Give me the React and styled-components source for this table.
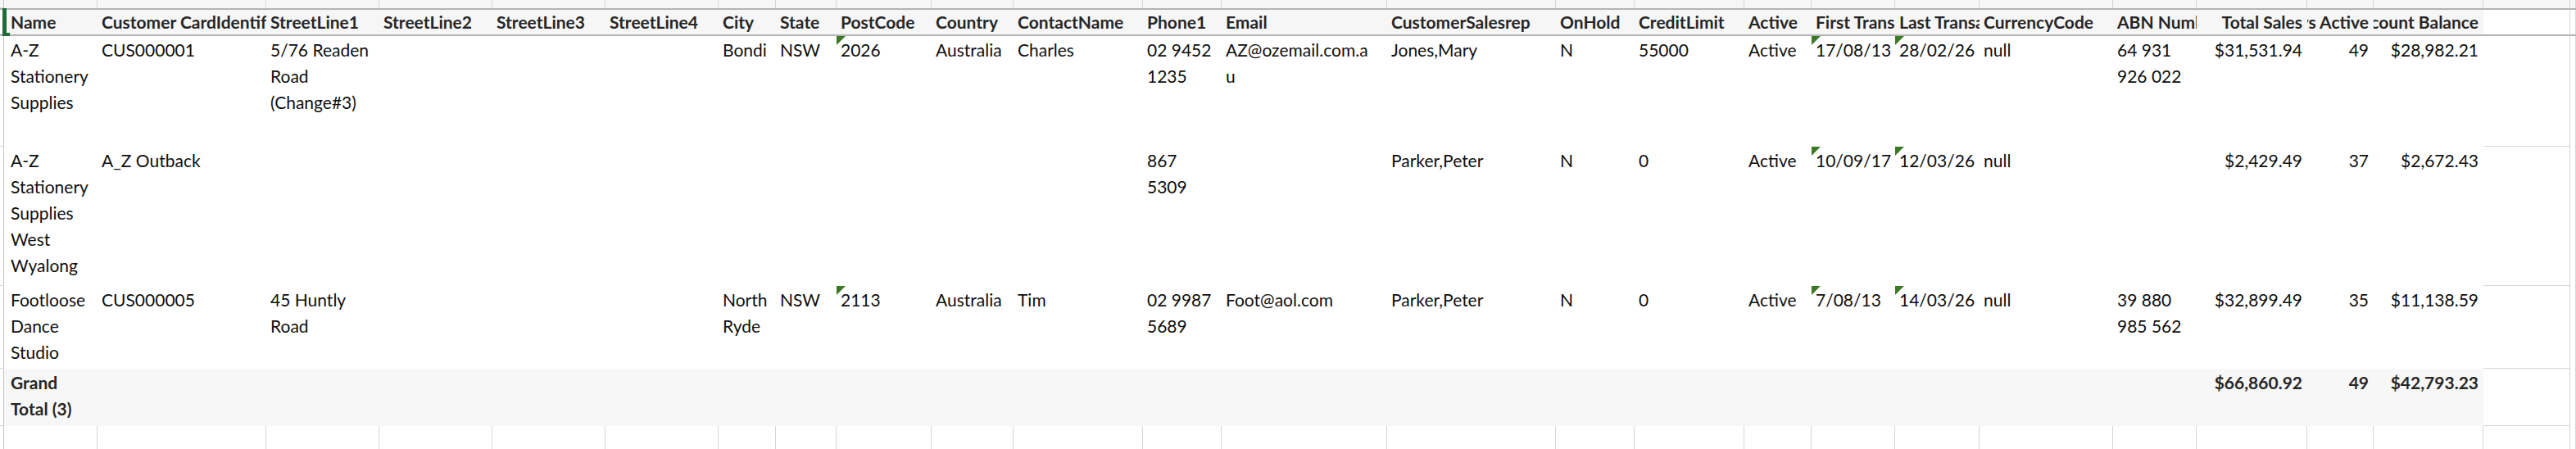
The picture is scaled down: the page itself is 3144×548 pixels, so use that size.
import React from "react";
import styled, { createGlobalStyle } from "styled-components";

const GlobalStyle = createGlobalStyle`
  html, body {
    margin: 0;
    padding: 0;
    background: #ffffff;
    overflow: hidden;
  }
  body {
    font-family: Lato, "Liberation Sans", sans-serif;
  }
`;

// column widths in px, taken from the sheet's gridlines
const columns = [
  { key: "name", title: "Name", width: 114, pad: 8 },
  { key: "card", title: "Customer CardIdentification", width: 206 },
  { key: "sl1", title: "StreetLine1", width: 138 },
  { key: "sl2", title: "StreetLine2", width: 138 },
  { key: "sl3", title: "StreetLine3", width: 138 },
  { key: "sl4", title: "StreetLine4", width: 138 },
  { key: "city", title: "City", width: 70 },
  { key: "state", title: "State", width: 74 },
  { key: "post", title: "PostCode", width: 116 },
  { key: "country", title: "Country", width: 100 },
  { key: "contact", title: "ContactName", width: 158 },
  { key: "phone", title: "Phone1", width: 96 },
  { key: "email", title: "Email", width: 202 },
  { key: "rep", title: "CustomerSalesrep", width: 206 },
  { key: "hold", title: "OnHold", width: 96 },
  { key: "credit", title: "CreditLimit", width: 134 },
  { key: "active", title: "Active", width: 82 },
  { key: "first", title: "First Transaction", width: 102 },
  { key: "last", title: "Last Transaction", width: 103 },
  { key: "currency", title: "CurrencyCode", width: 163 },
  { key: "abn", title: "ABN Number", width: 102 },
  { key: "sales", title: "Total Sales", width: 135, right: true },
  { key: "count", title: "Days Active", width: 81, right: true },
  { key: "balance", title: "Account Balance", width: 134, right: true },
];

const template = `5px ${columns.map((c) => `${c.width}px`).join(" ")} 106px 1fr`;

const rows = [
  {
    height: 135,
    name: ["A-Z", "Stationery", "Supplies"],
    card: ["CUS000001"],
    sl1: ["5/76 Readen", "Road", "(Change#3)"],
    city: ["Bondi"],
    state: ["NSW"],
    post: ["2026"],
    country: ["Australia"],
    contact: ["Charles"],
    phone: ["02 9452", "1235"],
    email: ["AZ@ozemail.com.a", "u"],
    rep: ["Jones,Mary"],
    hold: ["N"],
    credit: ["55000"],
    active: ["Active"],
    first: ["17/08/13"],
    last: ["28/02/26"],
    currency: ["null"],
    abn: ["64 931", "926 022"],
    sales: ["$31,531.94"],
    count: ["49"],
    balance: ["$28,982.21"],
    flags: ["post", "first", "last"],
  },
  {
    height: 170,
    name: ["A-Z", "Stationery", "Supplies", "West", "Wyalong"],
    card: ["A_Z Outback"],
    phone: ["867", "5309"],
    rep: ["Parker,Peter"],
    hold: ["N"],
    credit: ["0"],
    active: ["Active"],
    first: ["10/09/17"],
    last: ["12/03/26"],
    currency: ["null"],
    sales: ["$2,429.49"],
    count: ["37"],
    balance: ["$2,672.43"],
    flags: ["first", "last"],
  },
  {
    height: 101,
    name: ["Footloose", "Dance", "Studio"],
    card: ["CUS000005"],
    sl1: ["45 Huntly", "Road"],
    city: ["North", "Ryde"],
    state: ["NSW"],
    post: ["2113"],
    country: ["Australia"],
    contact: ["Tim"],
    phone: ["02 9987", "5689"],
    email: ["Foot@aol.com"],
    rep: ["Parker,Peter"],
    hold: ["N"],
    credit: ["0"],
    active: ["Active"],
    first: ["7/08/13"],
    last: ["14/03/26"],
    currency: ["null"],
    abn: ["39 880", "985 562"],
    sales: ["$32,899.49"],
    count: ["35"],
    balance: ["$11,138.59"],
    flags: ["post", "first", "last"],
  },
];

const grandTotal = {
  height: 70,
  name: ["Grand", "Total (3)"],
  sales: ["$66,860.92"],
  count: ["49"],
  balance: ["$42,793.23"],
};

const Sheet = styled.div`
  position: relative;
  width: 3144px;
  height: 548px;
  overflow: hidden;
  font-size: 21px;
  color: #0f0f0f;
`;

const Row = styled.div`
  display: grid;
  grid-template-columns: ${template};
  height: ${({ $height }) => $height}px;
  box-sizing: border-box;
  background: ${({ $bg }) => $bg || "#ffffff"};
  ${({ $frozen }) =>
    $frozen &&
    `
    border-top: 2px solid #b4b4b4;
    border-bottom: 2px solid #b4b4b4;
  `}
`;

const Gutter = styled.div`
  box-sizing: border-box;
  border-right: 1px solid #c4c4c4;
  border-bottom: 1px solid #d6d6d6;
`;

const Cell = styled.div`
  position: relative;
  box-sizing: border-box;
  min-width: 0;
  overflow: hidden;
  white-space: nowrap;
  display: flex;
  flex-direction: column;
  align-items: ${({ $right }) => ($right ? "flex-end" : "flex-start")};
  padding: ${({ $top }) => $top}px ${({ $right }) => ($right ? 6 : 0)}px 0
    ${({ $pad, $right }) => ($right ? 0 : $pad)}px;
  line-height: ${({ $lh }) => $lh}px;
  font-weight: ${({ $bold }) => ($bold ? 700 : 400)};
  color: ${({ $bold }) => ($bold ? "#262626" : "#0f0f0f")};
  background: ${({ $bg }) => $bg || "transparent"};
`;

const GridCell = styled.div`
  box-sizing: border-box;
  border-right: 1px solid #d6d6d6;
  border-bottom: ${({ $noBottom }) => ($noBottom ? "none" : "1px solid #d6d6d6")};
  background: ${({ $bg }) => $bg || "transparent"};
`;

const Line = styled.span`
  display: block;
`;

const Flag = styled.span`
  position: absolute;
  top: 0;
  left: 0;
  width: 11px;
  height: 11px;
  background: #3b7a24;
  clip-path: polygon(0 0, 100% 0, 0 100%);
`;

const Selection = styled.div`
  position: absolute;
  left: 3px;
  top: 10px;
  width: 5px;
  height: 34px;
  background: #1f6b3a;

  &::after {
    content: "";
    position: absolute;
    right: -4px;
    bottom: 0;
    width: 5px;
    height: 4px;
    background: #1f6b3a;
  }
`;

const DataRow = ({ row, bold, bg }) => (
  <Row $height={row.height} $bg={bg}>
    <Gutter />
    {columns.map((col) => (
      <Cell
        key={col.key}
        $right={col.right}
        $pad={col.pad || 5}
        $top={1}
        $lh={32}
        $bold={bold}
      >
        {row.flags && row.flags.includes(col.key) && <Flag />}
        {(row[col.key] || []).map((text, i) => (
          <Line key={i}>{text}</Line>
        ))}
      </Cell>
    ))}
    <GridCell />
    <GridCell $noBottom />
  </Row>
);

const App = () => (
  <Sheet>
    <GlobalStyle />

    <Row $height={10} $bg="#f6f6f6">
      <Gutter />
      {columns.map((col) => (
        <GridCell key={col.key} $noBottom />
      ))}
      <GridCell $noBottom />
      <GridCell $noBottom />
    </Row>

    <Row $height={34} $frozen>
      <Gutter />
      {columns.map((col) => (
        <Cell
          key={col.key}
          $right={col.right}
          $pad={col.pad || 5}
          $top={0}
          $lh={30}
          $bold
          $bg="#f6f6f6"
        >
          <Line>{col.title}</Line>
        </Cell>
      ))}
      <GridCell $noBottom />
      <GridCell $noBottom />
    </Row>

    {rows.map((row, i) => (
      <DataRow key={i} row={row} />
    ))}

    <Row $height={grandTotal.height}>
      <Gutter />
      {columns.map((col) => (
        <Cell
          key={col.key}
          $right={col.right}
          $pad={col.pad || 5}
          $top={1}
          $lh={32}
          $bold
          $bg="#f7f7f7"
        >
          {(grandTotal[col.key] || []).map((text, i) => (
            <Line key={i}>{text}</Line>
          ))}
        </Cell>
      ))}
      <GridCell />
      <GridCell $noBottom />
    </Row>

    {[0, 1].map((n) => (
      <Row key={n} $height={42}>
        <Gutter />
        {columns.map((col) => (
          <GridCell key={col.key} />
        ))}
        <GridCell />
        <GridCell $noBottom />
      </Row>
    ))}

    <Selection />
  </Sheet>
);

export default App;
